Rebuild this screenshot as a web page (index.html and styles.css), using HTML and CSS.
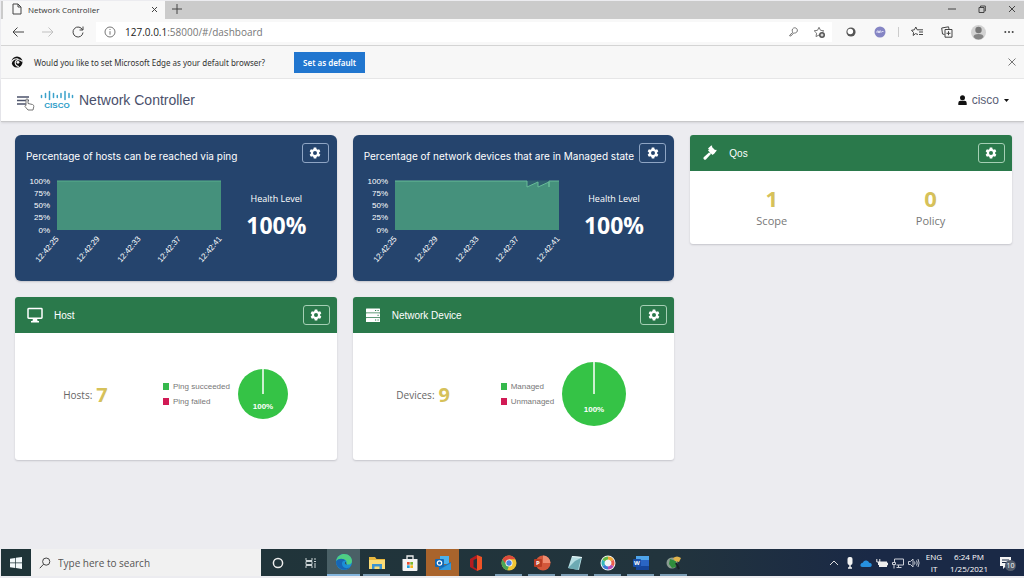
FILE: index.html
```html
<!DOCTYPE html>
<html lang="en">
<head>
    <meta charset="UTF-8">
    <meta name="viewport" content="width=device-width, initial-scale=1.0">
    <title>Network Controller</title>
    <link rel="stylesheet" href="styles.css">
</head>
<body>
    <svg class="defs" width="0" height="0" aria-hidden="true">
        <symbol id="gear" viewBox="0 0 24 24">
            <path fill="currentColor" fill-rule="evenodd" d="M9.5 1h5l.6 3.2 2 1.2 3.100-1.100 2.500 4.300-2.500 2.200v2.400l2.500 2.200-2.500 4.300-3.100-1.100-2 1.200-.6 3.200h-5l-.6-3.200-2-1.200-3.100 1.100-2.500-4.300 2.500-2.200v-2.400L1.300 8.600l2.500-4.300 3.100 1.100 2-1.200zM12 8a4 4 0 1 0 0 8 4 4 0 0 0 0-8z"/>
        </symbol>
    </svg>

    <div class="tab-strip">
        <div class="tab">
            <svg width="10" height="12" viewBox="0 0 10 12"><path class="line" d="M1 1h5l3 3v7H1zM6 1v3h3"/></svg>
            <span class="tab-title">Network Controller</span>
            <button class="icon-btn" aria-label="Close tab"><svg width="7" height="7" viewBox="0 0 7 7"><path class="line" d="M1 1l5 5M6 1l-5 5"/></svg></button>
        </div>
        <button class="icon-btn new-tab" aria-label="New tab"><svg width="10" height="10" viewBox="0 0 10 10"><path class="line" d="M5 0v10M0 5h10"/></svg></button>
        <div class="window-buttons">
            <button class="icon-btn" aria-label="Minimize"><svg width="8" height="8" viewBox="0 0 8 8"><path class="line" d="M0 4h8"/></svg></button>
            <button class="icon-btn" aria-label="Restore"><svg width="8" height="8" viewBox="0 0 8 8"><path class="line" d="M1 2.500h5v5H1zM2.500 2V1H7.300v5H6.500"/></svg></button>
            <button class="icon-btn" aria-label="Close"><svg width="8" height="8" viewBox="0 0 8 8"><path class="line" d="M1 1l6 6M7 1L1 7"/></svg></button>
        </div>
    </div>

    <div class="toolbar">
        <div class="nav-buttons">
            <button class="icon-btn" aria-label="Back"><svg width="12" height="10" viewBox="0 0 12 10"><path class="line" d="M12 5H1M5.500 .5L1 5l4.500 4.500"/></svg></button>
            <button class="icon-btn faded" aria-label="Forward"><svg width="12" height="10" viewBox="0 0 12 10"><path class="line" d="M0 5h11M6.500 .5L11 5 6.500 9.500"/></svg></button>
            <button class="icon-btn" aria-label="Refresh"><svg width="12" height="12" viewBox="0 0 12 12"><path class="line" d="M10.600 4A5 5 0 1 0 11 6.500M11 .5V4H7.500"/></svg></button>
        </div>
        <div class="address-bar">
            <svg width="12" height="12" viewBox="0 0 12 12"><circle class="line thin" cx="6" cy="6" r="5"/><path class="line thin" d="M6 5.200v3.500M6 3v1"/></svg>
            <label class="url" for="address"><b>127.0.0.1</b>:58000/#/dashboard</label>
            <input id="address" type="text" aria-label="Address">
            <svg width="10" height="10" viewBox="0 0 10 10"><path class="line thin" d="M4 5.300A2.600 2.600 0 1 1 5.600 6L4.500 6.300 1.800 9H.8V8z"/></svg>
            <svg class="star" width="13" height="13" viewBox="0 0 13 13"><path class="line thin" d="M6 9L3 10.600l.6-3.400L1.200 4.800l3.300-.5L6 1.300l1.500 3 3.300.5-1.500 1.400"/><circle cx="9" cy="9" r="3" fill="#555"/><path d="M9 7.500v3M7.500 9h3" stroke="#fff"/></svg>
        </div>
        <div class="extensions">
            <svg width="10" height="10" viewBox="0 0 10 10"><circle cx="5" cy="5" r="4.600" fill="#555"/><circle cx="4.300" cy="4.500" r="2.800" fill="#fff"/></svg>
            <svg width="12" height="12" viewBox="0 0 12 12"><circle cx="6" cy="6" r="5.500" fill="#8585c4"/><path d="M3 7V5h1.500v2M5.500 7V5H7v2M8 5.500h1.500" stroke="#d9d9f2" fill="none"/></svg>
            <span class="divider"></span>
            <svg width="12" height="12" viewBox="0 0 12 12"><path class="line" d="M7 8.500L4.500 7.600 2.200 9.500l.3-3L.5 4.300l2.900-.5L4.800 1l1.400 2.800H12M8 6h4M8 8.500h4"/></svg>
            <svg width="12" height="12" viewBox="0 0 12 12"><path class="line" d="M3.500 8.500L1.500 8 .7 2 7.500.8 8 3M4 3.500h7v7.700H4zM7.500 5.200v4M5.500 7.300h4"/></svg>
            <svg width="15" height="15" viewBox="0 0 15 15"><circle cx="7.500" cy="7.500" r="7.500" fill="#d2d2d2"/><circle cx="7.500" cy="5" r="3.200" fill="#777"/><path d="M2.500 12q0-3 5-3t5 3q-2 2.500-5 2.500T2.500 12" fill="#858585"/></svg>
            <svg width="10" height="4" viewBox="0 0 10 4" fill="#444"><circle cx="1.300" cy="2" r="1"/><circle cx="5" cy="2" r="1"/><circle cx="8.700" cy="2" r="1"/></svg>
        </div>
    </div>

    <div class="info-bar">
        <svg width="12" height="12" viewBox="0 0 12 12"><circle cx="6" cy="6" r="5.500" fill="#111"/><path d="M11.500 5.500C9 3 5 3.200 4.300 6c-.3 2 1 4 3.500 4.600M0 7.500C1 4 4 2 7.300 3" fill="none" stroke="#f8f8f8" stroke-width="1.200"/><circle cx="7" cy="6.300" r="1.400" fill="#f8f8f8"/></svg>
        <span>Would you like to set Microsoft Edge as your default browser?</span>
        <button class="default-btn">Set as default</button>
        <button class="icon-btn close-bar" aria-label="Dismiss"><svg width="8" height="8" viewBox="0 0 8 8"><path class="line thin" d="M.5 .5l7 7M7.500 .5l-7 7"/></svg></button>
    </div>

    <header class="app-header">
        <button class="icon-btn menu-btn" aria-label="Menu">
            <svg width="20" height="19" viewBox="0 0 20 19"><path d="M1 4h12M1 7.500h12M1 11h12" stroke="#4c536b" stroke-width="1.700"/><path d="M10 12.500V7q0-1.200 1-1.200T12 7v3.500l4.500 1q1.500.5 1.300 2L17 17h-5l-3-3.500q.2-1.500 1-1z" fill="#fff" stroke="#777"/></svg>
        </button>
        <svg width="34" height="20" viewBox="0 0 34 20">
            <path d="M1.500 5.500v2M5.500 3.500v4M9.500 1.500v8M13.500 3.500v4M17.300 5.500v2M21 3.500v4M25 1.500v8M29 3.500v4M32.500 5.500v2" stroke="#3aa1ca" stroke-width="1.500" stroke-linecap="round"/>
            <text class="logo-text" x="17" y="18" text-anchor="middle">CISCO</text>
        </svg>
        <h1>Network Controller</h1>
        <button class="user-menu">
            <svg width="9" height="10" viewBox="0 0 9 10"><circle cx="4.500" cy="2.700" r="2.500"/><path d="M.3 10V8q0-2.300 2.200-2.300h4Q8.700 5.700 8.700 8v2z"/></svg>
            cisco
            <svg width="5" height="3" viewBox="0 0 5 3"><path d="M0 0h5L2.500 3z"/></svg>
        </button>
    </header>

    <main class="dashboard">
        <section class="card health">
            <div class="card-head">
                <h2>Percentage of hosts can be reached via ping</h2>
                <button class="settings" aria-label="Settings"><svg width="12" height="12"><use href="#gear"/></svg></button>
            </div>
            <div class="health-body">
                <svg class="chart" width="210" height="100" viewBox="0 0 210 100">
                    <rect x="36" y="10" width="164" height="49" fill="#45917c"/>
                    <path d="M36 10h164" stroke="#58ad8b"/>
                    <g text-anchor="end">
                        <text x="29" y="13">100%</text>
                        <text x="29" y="25">75%</text>
                        <text x="29" y="37">50%</text>
                        <text x="29" y="49">25%</text>
                        <text x="29" y="62">0%</text>
                        <text transform="translate(38 68) rotate(-50)">12:42:25</text>
                        <text transform="translate(79 68) rotate(-50)">12:42:29</text>
                        <text transform="translate(120 68) rotate(-50)">12:42:33</text>
                        <text transform="translate(160 68) rotate(-50)">12:42:37</text>
                        <text transform="translate(201 68) rotate(-50)">12:42:41</text>
                    </g>
                </svg>
                <div class="level">
                    <span>Health Level</span>
                    <strong>100%</strong>
                </div>
            </div>
        </section>

        <section class="card health">
            <div class="card-head">
                <h2>Percentage of network devices that are in Managed state</h2>
                <button class="settings" aria-label="Settings"><svg width="12" height="12"><use href="#gear"/></svg></button>
            </div>
            <div class="health-body">
                <svg class="chart" width="210" height="100" viewBox="0 0 210 100">
                    <rect x="36" y="10" width="164" height="49" fill="#45917c"/>
                    <path d="M168 9.500v6.500l11-5v5l11-5v-1.500z" fill="#2f6070"/>
                    <path d="M36 10H168v6l11-5v5l11-5v5V10h10" fill="none" stroke="#68bb98"/>
                    <g text-anchor="end">
                        <text x="29" y="13">100%</text>
                        <text x="29" y="25">75%</text>
                        <text x="29" y="37">50%</text>
                        <text x="29" y="49">25%</text>
                        <text x="29" y="62">0%</text>
                        <text transform="translate(38 68) rotate(-50)">12:42:25</text>
                        <text transform="translate(79 68) rotate(-50)">12:42:29</text>
                        <text transform="translate(120 68) rotate(-50)">12:42:33</text>
                        <text transform="translate(160 68) rotate(-50)">12:42:37</text>
                        <text transform="translate(201 68) rotate(-50)">12:42:41</text>
                    </g>
                </svg>
                <div class="level">
                    <span>Health Level</span>
                    <strong>100%</strong>
                </div>
            </div>
        </section>

        <section class="card">
            <div class="card-head green">
                <svg width="16" height="16" viewBox="0 0 16 16"><path fill="#fff" d="M6.200 3.200l3-2.700 1 .3-.2 1.200 3 3 1.300-.2.300 1-3 3.400-1-.4.100-1.200-.8-.7-1.300 1.300.3.900-5 5.300q-1 .8-2-.2t-.2-2l5.300-4.700.9.200L9.200 6 7.500 4.200l-1.200.1z"/><path fill="#fff" d="M8.500 3L13 7.500 10.500 10 6 5.500z"/></svg>
                <h2>Qos</h2>
                <button class="settings" aria-label="Settings"><svg width="12" height="12"><use href="#gear"/></svg></button>
            </div>
            <div class="qos-body">
                <div class="stat"><strong>1</strong><span>Scope</span></div>
                <div class="stat"><strong>0</strong><span>Policy</span></div>
            </div>
        </section>

        <section class="card">
            <div class="card-head green">
                <svg width="16" height="16" viewBox="0 0 16 16"><path fill="none" stroke="#fff" stroke-width="1.500" d="M1.700 1.500h12.600q.7 0 .7.700v8.300q0 .7-.7.700H1.700q-.7 0-.7-.7V2.200q0-.7.7-.7z"/><path fill="#fff" d="M6 11h4l.5 3H12v1.500H4V14h1.500z"/></svg>
                <h2>Host</h2>
                <button class="settings" aria-label="Settings"><svg width="12" height="12"><use href="#gear"/></svg></button>
            </div>
            <div class="count-body">
                <p class="count">Hosts: <strong>7</strong></p>
                <ul class="legend">
                    <li class="ok">Ping succeeded</li>
                    <li class="bad">Ping failed</li>
                </ul>
                <svg class="pie" width="50" height="50" viewBox="0 0 50 50">
                    <circle cx="25" cy="25" r="25" fill="#35c346"/>
                    <path d="M25 0v25" stroke="#fff" stroke-width="1.500"/>
                    <text x="25" y="40" text-anchor="middle">100%</text>
                </svg>
            </div>
        </section>

        <section class="card">
            <div class="card-head green">
                <svg width="16" height="16" viewBox="0 0 16 16"><g fill="#fff"><rect x="1" y="1.500" width="14" height="4" rx=".5"/><rect x="1" y="6.300" width="14" height="4" rx=".5"/><rect x="1" y="11" width="14" height="4" rx=".5"/></g><path d="M10 3.500h1.200M12.500 3.500h1.200M12.500 8.300h1.200M10 13h1.200M12.500 13h1.200" stroke="#29794b"/></svg>
                <h2>Network Device</h2>
                <button class="settings" aria-label="Settings"><svg width="12" height="12"><use href="#gear"/></svg></button>
            </div>
            <div class="count-body">
                <p class="count">Devices: <strong>9</strong></p>
                <ul class="legend">
                    <li class="ok">Managed</li>
                    <li class="bad">Unmanaged</li>
                </ul>
                <svg class="pie" width="64" height="64" viewBox="0 0 64 64">
                    <circle cx="32" cy="32" r="32" fill="#35c346"/>
                    <path d="M32 0v32" stroke="#fff" stroke-width="1.500"/>
                    <text x="32" y="50" text-anchor="middle">100%</text>
                </svg>
            </div>
        </section>
    </main>

    <footer class="taskbar">
        <button class="start" aria-label="Start"><svg width="12" height="12" viewBox="0 0 12 12"><path fill="#f2f8fa" d="M0 1.700l5.200-.8v4.700H0zM5.900.8L12 0v5.600H5.900zM0 6.300h5.200V11L0 10.300zM5.900 6.300H12V12l-6.100-.9z"/></svg></button>
        <div class="search">
            <svg width="12" height="12" viewBox="0 0 12 12"><circle class="line" cx="7.200" cy="4.600" r="3.600"/><path class="line" d="M4.600 7.200L.8 11.200"/></svg>
            <input type="text" placeholder="Type here to search" aria-label="Type here to search">
        </div>
        <div class="apps">
            <button aria-label="Cortana"><svg width="18" height="18" viewBox="0 0 18 18"><circle cx="9" cy="9" r="4.600" fill="none" stroke="#eee" stroke-width="1.500"/></svg></button>
            <button aria-label="Task view"><svg width="18" height="18" viewBox="0 0 18 18"><path d="M4 4v2.500h6V4M4 14v-2.500h6V14M4 7.500v3h6v-3zM13 4v2M13 9v5M12 7.500h2" fill="none" stroke="#ccd4d6"/></svg></button>
            <button class="active" aria-label="Edge"><svg width="18" height="18" viewBox="0 0 18 18"><circle cx="9" cy="9" r="8" fill="#1b8fd6"/><path d="M1.200 8C2 3 6 1 9 1c5 0 8 3.500 8 7 0 3-3 4-5 3.500-1.500-.5 0-1.500-.5-3C11 6 5 4.500 1.200 8z" fill="#4fcf83"/><path d="M1.100 8.500C4 4.500 9 5.500 10.500 8 7 7 6 11 8 13.500s5.500 2 7.500 0C13 17 9 17.500 6 16 2.500 14.500 1 11.500 1.100 8.500z" fill="#1766b5"/><path d="M10.800 8.500c-1.500 1-1 3 1 3.300l-.5-1.300z" fill="#35505a"/></svg></button>
            <button class="open" aria-label="File Explorer"><svg width="18" height="18" viewBox="0 0 18 18"><path fill="#e9b83f" d="M1 3h6l1.500 2H17v10H1z"/><path fill="#fbdc77" d="M1 6h16v9H1z"/><path fill="#3e94d0" d="M4 10h10v5h-2.500v-2.500h-5V15H4z"/></svg></button>
            <button aria-label="Store"><svg width="18" height="18" viewBox="0 0 18 18"><path d="M6 5V2h6v3" fill="none" stroke="#eee" stroke-width="1.300"/><path fill="#f4f4f4" d="M1.500 5h15v11q0 1-1 1h-13q-1 0-1-1z"/><path fill="#e94f2f" d="M6 8h2.700v2.700H6z"/><path fill="#7db82c" d="M9.300 8H12v2.700H9.300z"/><path fill="#1d9fdc" d="M6 11.300h2.700V14H6z"/><path fill="#f5b51c" d="M9.300 11.300H12V14H9.300z"/></svg></button>
            <button class="alert" aria-label="Outlook"><svg width="18" height="18" viewBox="0 0 18 18"><path fill="#4bb2ed" d="M6 2h9v8H6z"/><path fill="#1477c4" d="M5 8l6 3 6-3v8H5z"/><path fill="#2f99dd" d="M5 16l12-7v7z"/><rect x="1" y="5" width="9" height="8" rx="1" fill="#1267b4"/><circle cx="5.500" cy="9" r="2.200" fill="none" stroke="#fff" stroke-width="1.200"/></svg></button>
            <button aria-label="Office"><svg width="18" height="18" viewBox="0 0 18 18"><path fill="#b51c20" d="M3 5l7-4v3.500L6.500 6v7L10 15v2l-7-4z"/><path fill="#ef5326" d="M10 1l5 2v12l-5 2z"/></svg></button>
            <button class="open" aria-label="Chrome"><svg width="18" height="18" viewBox="0 0 18 18"><circle cx="9" cy="9" r="7.500" fill="#efc534"/><path fill="#dc4a3c" d="M9 9H2.600L2.500 5.300A7.500 7.500 0 0 1 15.500 5.200H9z"/><path fill="#4aa557" d="M2.500 5.300L6.500 11 9 12l-1.700 4.300A7.500 7.500 0 0 1 2.500 5.300z"/><circle cx="9" cy="9" r="3.500" fill="#fff"/><circle cx="9" cy="9" r="2.700" fill="#4a83e0"/></svg></button>
            <button class="open" aria-label="PowerPoint"><svg width="18" height="18" viewBox="0 0 18 18"><circle cx="10" cy="9" r="7.500" fill="#d3573a"/><path fill="#ef8c70" d="M10 1.500A7.500 7.500 0 0 1 17.500 9H10z"/><rect x="1" y="5" width="8" height="8" rx="1" fill="#b93c22"/><text x="5" y="11" text-anchor="middle">P</text></svg></button>
            <button class="open" aria-label="Notepad"><svg width="18" height="18" viewBox="0 0 18 18"><path fill="#b6dde2" d="M6 2l10 1-3 13-11-2z"/><path fill="#6daab3" d="M9 7l6-3-3 12-10-2z"/><path d="M6 2.500l10 1" stroke="#e9f6f7"/></svg></button>
            <button class="open" aria-label="Paint"><svg width="18" height="18" viewBox="0 0 18 18"><circle cx="9" cy="9" r="7.500" fill="#f3f3f3"/><g fill="none" stroke-width="3"><path d="M9 4a5 5 0 0 1 4.300 2.500" stroke="#f0a736"/><path d="M13.300 6.500a5 5 0 0 1 0 5" stroke="#ed5d4d"/><path d="M13.300 11.500A5 5 0 0 1 9 14" stroke="#b44cb4"/><path d="M9 14a5 5 0 0 1-4.300-2.500" stroke="#3d79d6"/><path d="M4.700 11.500a5 5 0 0 1 0-5" stroke="#32b5b9"/><path d="M4.700 6.500A5 5 0 0 1 9 4" stroke="#66b845"/></g></svg></button>
            <button class="open" aria-label="Word"><svg width="18" height="18" viewBox="0 0 18 18"><rect x="4" y="2" width="13" height="14" rx="1" fill="#2a65c4"/><path fill="#4fa5ea" d="M4 2h13v4H4z"/><path fill="#16469b" d="M4 12h13v4H4z"/><rect x="1" y="5" width="8" height="8" rx="1" fill="#184ea8"/><text x="5" y="11" text-anchor="middle">W</text></svg></button>
            <button class="open" aria-label="Packet Tracer"><svg width="18" height="18" viewBox="0 0 18 18"><circle cx="7" cy="9" r="5.500" fill="#8a9b91"/><path fill="#2f8c3c" d="M5 5l6 2v6l-4 1-3-4z"/><path fill="#e0b34c" d="M8 4q4-3 8 0l-2 4-4-1z"/><path d="M11 9l3 6" stroke="#182226" stroke-width="2"/></svg></button>
        </div>
        <div class="tray">
            <svg width="12" height="12" viewBox="0 0 12 12"><path d="M2 8l4-4 4 4" fill="none" stroke="#ddd"/></svg>
            <svg width="12" height="12" viewBox="0 0 12 12"><rect x="3.500" y="0" width="5" height="8" rx="2" fill="#f4f4f4"/><path d="M6 8v3M4 11h4" stroke="#eee" stroke-width="1.500"/></svg>
            <svg width="12" height="12" viewBox="0 0 12 12"><path fill="#2791df" d="M2.500 10Q0 10 .5 7.500 1 6 2.700 5.800 4 3 6.500 3.500q2 .3 2.700 2.300Q12 6 11.700 8.500 11.500 10 9.500 10z"/></svg>
            <svg width="12" height="12" viewBox="0 0 12 12"><path fill="#eee" d="M3 4.500h8v1.200h1v2.600h-1V10H3z"/><path d="M.8 2v3h3V2M2.500 5v3" fill="none" stroke="#eee"/></svg>
            <svg width="12" height="12" viewBox="0 0 12 12"><path d="M2.500 5V2h9v6h-7M6.500 8v2.500M4.500 10.500h5M.5 5.500h3v2h-3zM2 8v3.500" fill="none" stroke="#ccd0d8"/></svg>
            <svg width="12" height="12" viewBox="0 0 12 12"><path d="M.5 4.500h2L5 2v8L2.500 7.500h-2zM6.500 4.500q1 1.500 0 3M8.500 3.500q1.500 2.500 0 5M10 2q2.200 4 0 8" fill="none" stroke="#c4cad4"/></svg>
            <div class="tray-text"><span>ENG</span><span>IT</span></div>
            <div class="tray-text clock"><span>6:24 PM</span><span>1/25/2021</span></div>
            <button class="notify" aria-label="Notifications">
                <svg width="12" height="12" viewBox="0 0 12 12"><path fill="#f4f4f4" d="M0 0h11v9H6l-3 3V9H0z"/><path d="M2 3h7M2 5.500h7" stroke="#1b2a45"/></svg>
                <span class="badge">10</span>
            </button>
        </div>
    </footer>
</body>
</html>
```
FILE: styles.css
```css
* {
    box-sizing: border-box;
}
body {
    font-family: "Open Sans", "Noto Sans", sans-serif;
    font-size: 8px;
    color: #333;
    background-color: #ececf0;
    margin: 0;
    padding: 1px 0 2px 1px;
    min-height: 100vh;
    display: flex;
    flex-direction: column;
}
h1, h2, p, ul {
    margin: 0;
    padding: 0;
    font-weight: normal;
}
svg {
    display: block;
    flex-shrink: 0;
}
button {
    font-family: inherit;
    border: none;
    background: none;
    padding: 0;
}
.defs {
    position: absolute;
}
.line {
    fill: none;
    stroke: #444;
    stroke-width: 1;
}
.thin {
    stroke: #777;
}
.icon-btn {
    display: flex;
    align-items: center;
    justify-content: center;
}
.faded {
    opacity: 0.3;
}

/* browser chrome */
.tab-strip {
    display: flex;
    height: 18px;
    background-color: #cbcbcb;
}
.tab {
    display: flex;
    align-items: center;
    width: 162px;
    margin-left: 2px;
    padding: 0 7px 2px 9px;
    background-color: #f8f8f8;
}
.tab-title {
    flex: 1;
    margin-left: 6px;
}
.new-tab {
    margin: 3px 0 0 7px;
    height: 10px;
}
.window-buttons {
    display: flex;
    gap: 22px;
    margin: 0 8px 2px auto;
}
.toolbar {
    display: flex;
    align-items: center;
    height: 27px;
    background-color: #f8f8f8;
    border-bottom: 1px solid #d4d4d4;
}
.nav-buttons {
    display: flex;
    gap: 18px;
    padding: 0 12px 0 11px;
}
.address-bar {
    flex: 1;
    display: flex;
    align-items: center;
    height: 20px;
    padding: 0 6px 0 8px;
    background-color: #fff;
}
.address-bar input {
    flex: 1;
    min-width: 0;
    height: 18px;
    border: none;
    outline: none;
    background: none;
}
.url {
    margin-left: 9px;
    font-size: 10px;
    color: #777;
}
.url b {
    font-weight: normal;
    color: #222;
}
.star {
    margin-left: 14px;
}
.extensions {
    display: flex;
    align-items: center;
    gap: 18px;
    padding: 0 10px 0 20px;
}
.address-bar {
    margin-right: -6px;
}
.divider {
    width: 1px;
    height: 10px;
    margin: 0 -6px;
    background-color: #ccc;
}
.info-bar {
    display: flex;
    align-items: center;
    height: 33px;
    padding: 0 8px 0 10px;
    gap: 11px;
    font-family: "Noto Sans", sans-serif;
    background-color: #f7f7f7;
    border-bottom: 1px solid #e8e8e8;
}
.default-btn {
    height: 21px;
    margin-left: 18px;
    padding: 0 9px;
    font-size: 8px;
    font-weight: 600;
    color: #fff;
    background-color: #2176cf;
}
.close-bar {
    margin-left: auto;
}

/* application header */
.app-header {
    display: flex;
    align-items: center;
    height: 43px;
    padding: 0 15px;
    background-color: #fff;
    border-bottom: 1px solid #c8c8ca;
    box-shadow: 0 1px 2px #d4d4d8;
}
.menu-btn {
    margin: 4px 4px 0 0;
}
.logo-text {
    font: bold 8px "Liberation Sans", Arial, sans-serif;
    fill: #2b9cc8;
}
h1 {
    font-family: "Liberation Sans", Arial, sans-serif;
    font-size: 14px;
    color: #4a506b;
    margin-left: 5px;
}
.user-menu {
    display: flex;
    align-items: center;
    gap: 5px;
    margin-left: auto;
    font-family: "Liberation Sans", Arial, sans-serif;
    font-size: 12px;
    color: #5a6075;
}
.user-menu svg {
    fill: #111;
}

/* dashboard */
.dashboard {
    flex: 1;
    display: grid;
    grid-template-columns: repeat(3, 1fr);
    align-content: start;
    align-items: start;
    gap: 16px;
    padding: 13px 12px 13px 14px;
}
.card {
    background-color: #fff;
    border-radius: 3px;
    box-shadow: 0 1px 2px #c4c4ca;
    overflow: hidden;
}
.card-head {
    display: flex;
    align-items: center;
    height: 36px;
    padding: 0 7px 0 12px;
}
.card-head h2 {
    flex: 1;
    font-family: "Liberation Sans", Arial, sans-serif;
    font-size: 10px;
    color: #fff;
    margin-left: 11px;
    white-space: nowrap;
}
.green {
    background-color: #2a794b;
}
.settings {
    display: flex;
    align-items: center;
    justify-content: center;
    width: 27px;
    height: 20px;
    color: #fff;
    border: 1px solid #a5cfb4;
    border-radius: 3px;
}
.health {
    background-color: #25446d;
    border-radius: 6px;
}
.health .card-head {
    padding: 0 8px 0 11px;
}
.health h2 {
    font-family: Inter, Arial, sans-serif;
    font-size: 10px;
    margin: 6px 0 0;
}
.health .settings {
    border-color: #8fa5c4;
}
.health-body {
    display: flex;
    height: 110px;
    padding-left: 6px;
    color: #fff;
}
.chart text {
    font: 8px "Liberation Sans", Arial, sans-serif;
    fill: #fff;
}
.level {
    flex: 1;
    display: flex;
    flex-direction: column;
    align-items: center;
    padding: 21px 15px 0 0;
    font-size: 9px;
    line-height: 14px;
}
.level strong {
    font-size: 23px;
    line-height: 38px;
}
.qos-body {
    display: grid;
    grid-template-columns: 1fr 1fr;
    height: 73px;
    padding: 14px 2px 0;
}
.stat {
    display: flex;
    flex-direction: column;
    align-items: center;
    gap: 2px;
    font-size: 11px;
    line-height: 16px;
    color: #777;
}
.stat strong {
    font-size: 22px;
    line-height: 26px;
    color: #d6c15a;
}
.count-body {
    display: flex;
    align-items: center;
    height: 127px;
    padding-bottom: 6px;
}
.count {
    display: flex;
    align-items: center;
    justify-content: center;
    gap: 4px;
    width: 141px;
    margin-right: 7px;
    padding-top: 3px;
    font-size: 10px;
    color: #666;
}
.count strong {
    font-size: 20px;
    line-height: 26px;
    color: #d6c15a;
}
.legend {
    list-style: none;
    font-family: "Liberation Sans", Arial, sans-serif;
    line-height: 15px;
    color: #777;
}
.legend li {
    display: flex;
    align-items: center;
    gap: 4px;
    white-space: nowrap;
}
.legend li::before {
    content: "";
    width: 6px;
    height: 7px;
    background-color: #35b94c;
}
.legend .bad::before {
    background-color: #d11a55;
}
.pie {
    margin-left: 8px;
}
.pie text {
    font: bold 8px "Liberation Sans", Arial, sans-serif;
    fill: #fff;
}

/* taskbar */
.taskbar {
    display: flex;
    height: 27px;
    background: linear-gradient(90deg, #1f3438, #22343d 65%, #1a2946 85%);
}
.start {
    display: flex;
    align-items: center;
    justify-content: center;
    width: 30px;
}
.search {
    display: flex;
    align-items: center;
    gap: 7px;
    width: 230px;
    padding-left: 8px;
    background-color: #f1f1f1;
}
.search input {
    flex: 1;
    min-width: 0;
    border: none;
    outline: none;
    padding: 0;
    background: none;
    font-family: inherit;
    font-size: 10px;
}
.search input::placeholder {
    color: #555;
}
.apps {
    display: flex;
}
.apps button {
    display: flex;
    align-items: center;
    justify-content: center;
    width: 33px;
}
.apps text {
    font: bold 6px "Open Sans", sans-serif;
    fill: #fff;
}
.apps .active {
    background-color: #4a6066;
    border-bottom: 2px solid #82b4dc;
}
.apps .open {
    background: linear-gradient(#7b9db5, #7b9db5) center bottom / 27px 2px no-repeat;
}
.apps .alert {
    background-color: #a9642c;
}
.tray {
    display: flex;
    align-items: center;
    gap: 4px;
    margin-left: auto;
    padding-right: 7px;
    color: #fff;
}
.tray-text {
    display: flex;
    flex-direction: column;
    align-items: center;
    line-height: 12px;
    margin-left: 2px;
}
.clock {
    margin-left: 4px;
}
.notify {
    position: relative;
    width: 17px;
    margin-left: 8px;
}
.badge {
    position: absolute;
    left: 5px;
    top: 3px;
    width: 11px;
    height: 11px;
    border-radius: 50%;
    font-size: 7px;
    line-height: 11px;
    color: #fff;
    background-color: #525c6c;
}
```
